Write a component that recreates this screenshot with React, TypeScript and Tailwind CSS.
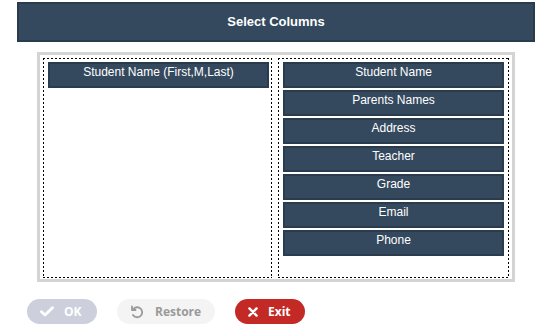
import React from "react";

const Item = ({ label }: { label: string }) => (
  <div className="w-[221px] h-[26px] bg-[#34495e] border-2 border-[#2a3b4d] text-white text-[12px] leading-[14px] pt-[1px] text-center whitespace-nowrap">
    {label}
  </div>
);

const CheckIcon = () => (
  <svg width="14" height="11" viewBox="0 0 14 11" className="shrink-0">
    <path d="M1.5 5.8 L5 9 L12.5 1.8" fill="none" stroke="white" strokeWidth="2.8" strokeLinecap="round" strokeLinejoin="round" />
  </svg>
);

const UndoIcon = () => (
  <svg width="14" height="14" viewBox="0 0 14 14" className="shrink-0">
    <path d="M3.2 4.2 A5 5 0 1 1 3 10" fill="none" stroke="#9a9a9a" strokeWidth="1.8" strokeLinecap="round" />
    <path d="M2 1.5 L2 5 L5.5 5" fill="none" stroke="#9a9a9a" strokeWidth="1.8" strokeLinecap="round" strokeLinejoin="round" />
  </svg>
);

const XIcon = () => (
  <svg width="10" height="10" viewBox="0 0 10 10" className="shrink-0">
    <path d="M1.4 1.4 L8.6 8.6 M8.6 1.4 L1.4 8.6" fill="none" stroke="white" strokeWidth="2.4" strokeLinecap="round" />
  </svg>
);

const dotted =
  "[background:repeating-linear-gradient(to_right,#000_0_2px,transparent_2px_4px)_left_top/100%_1px_no-repeat,repeating-linear-gradient(to_right,#000_0_2px,transparent_2px_4px)_left_bottom/100%_1px_no-repeat,repeating-linear-gradient(to_bottom,#000_0_2px,transparent_2px_4px)_left_top/1px_100%_no-repeat,repeating-linear-gradient(to_bottom,#000_0_2px,transparent_2px_4px)_right_top/1px_100%_no-repeat]";

export default function App() {
  const right = ["Student Name", "Parents Names", "Address", "Teacher", "Grade", "Email", "Phone"];
  return (
    <div className="w-[543px] h-[334px] bg-white pt-[2px] font-['Liberation_Sans',Arial,sans-serif] overflow-hidden">
      <div className="ml-[17px] w-[518px] h-[40px] bg-[#34495e] border-2 border-[#2a3b4d] flex items-center justify-center text-white font-bold text-[13px]">
        Select Columns
      </div>
      <div className="mt-[10px] ml-[37px] w-[478px] h-[230px] border-[3px] border-[#d4d4d4] p-[3px] pb-[1px] flex gap-[6px]">
        <div className={`w-[229px] h-full ${dotted} pt-[4px] pl-[5px] pr-[3px]`}>
          <Item label="Student Name (First,M,Last)" />
        </div>
        <div className={`w-[231px] h-full ${dotted} pt-[4px] pl-[5px] flex flex-col gap-[2px]`}>
          {right.map((r) => (
            <Item key={r} label={r} />
          ))}
        </div>
      </div>
      <div className="mt-[17px] ml-[27px] flex gap-[20px] font-['Open_Sans',sans-serif] font-bold text-[12px]">
        <div className="w-[70px] h-[25px] rounded-full bg-[#cdd0dc] text-white flex items-center pl-[13px] gap-[10px]">
          <CheckIcon />
          <span>OK</span>
        </div>
        <div className="w-[98px] h-[25px] rounded-full bg-[#f4f4f4] text-[#9a9a9a] flex items-center pl-[13px] gap-[11px]">
          <UndoIcon />
          <span>Restore</span>
        </div>
        <div className="w-[70px] h-[25px] rounded-full bg-[#c42a25] text-white flex items-center pl-[13px] gap-[10px]">
          <XIcon />
          <span>Exit</span>
        </div>
      </div>
    </div>
  );
}
